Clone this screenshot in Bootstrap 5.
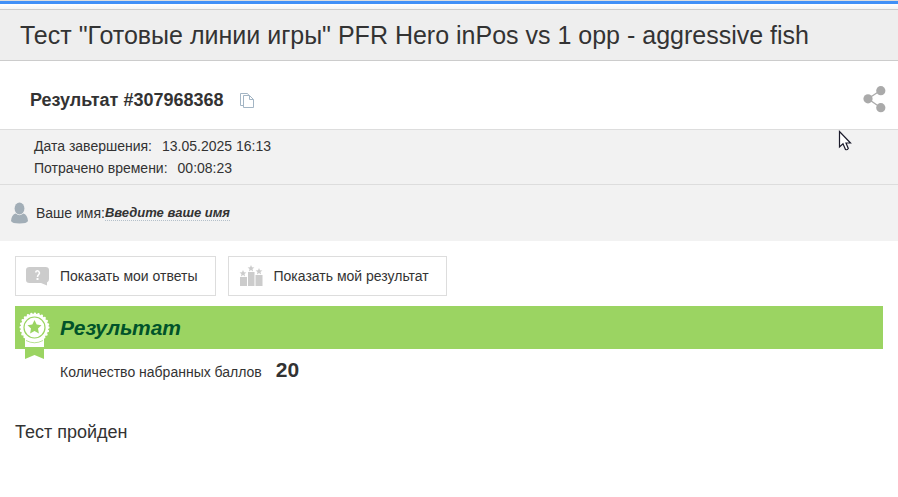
<!DOCTYPE html>
<html lang="ru">
<head>
<meta charset="utf-8">
<meta name="viewport" content="width=device-width, initial-scale=1">
<title>Результат теста</title>
<link href="https://cdn.jsdelivr.net/npm/bootstrap@5.3.0/dist/css/bootstrap.min.css" rel="stylesheet">
<style>
body { font-family: "Liberation Sans", Arial, sans-serif; font-size: 14px; line-height: 22px; color: #333; background: #fff; }
svg { display: block; flex: none; }
.top-line { height: 9px; border-top: 1px solid #ddd; background: linear-gradient(#4190f7 3px, #fff 3px, #f4f4f4); }
.title-bar { background: #eee; border-top: 1px solid #ccc; border-bottom: 1px solid #ccc; padding: 0 20px; }
.title-bar h1 { font-size: 25px; line-height: 50px; font-weight: 400; }
.result-head { padding: 20px 12px 10px 30px; border-bottom: 1px solid #ddd; }
.result-head h2 { font-size: 18px; line-height: 38px; font-weight: 700; }
.icon-btn { border: 0; padding: 0; background: none; }
.info { background: #f2f2f2; padding: 5px 34px; border-bottom: 1px solid #ddd; }
.info dt { font-weight: 400; }
.info dd { margin: 0 0 0 10px; }
.person { background: #f2f2f2; padding: 17px 11px; }
.name-link { font-size: 13px; line-height: 15px; font-weight: 700; font-style: italic; color: #333; text-decoration: none; border-bottom: 1px dotted #b4c0ca; }
.content { padding: 15px; }
.tools { gap: 12px; }
.btn-tool { border: 1px solid #ddd; border-radius: 0; padding: 8px 17px 8px 10px; font-size: 14px; line-height: 22px; color: #333; background: #fff; }
.btn-tool:hover { border-color: #bbb; }
.award { background: #9bd462; padding-left: 45px; margin-top: 10px; }
.award h3 { font-size: 21px; line-height: 43px; font-weight: 700; font-style: italic; color: #00532a; }
.medal { left: 4px; top: 6px; }
.score { padding: 9px 45px; line-height: 24px; gap: 14px; }
.score strong { font-size: 21px; }
.passed { font-size: 18px; line-height: 24px; margin-top: 27px; }
.pointer { left: 838px; top: 130px; pointer-events: none; }
</style>
<script src="https://cdn.jsdelivr.net/npm/bootstrap@5.3.0/dist/js/bootstrap.bundle.min.js" defer></script>
</head>
<body>
<div class="top-line"></div>
<header class="title-bar"><h1 class="m-0">Тест "Готовые линии игры" PFR Hero inPos vs 1 opp - aggressive fish</h1></header>
<main>
  <section class="result-head d-flex align-items-center">
    <h2 class="m-0">Результат #307968368</h2>
    <button class="icon-btn ms-3" type="button" aria-label="Скопировать">
      <svg width="15" height="16" viewBox="0 0 15 16" fill="none" stroke="#a3b5c4"><path d="M3 13.500H.5V1.500H7.500L9 3.500"/><path d="M3.500 3.500H9.500L13.500 7.500V15.500H3.500Z" fill="#fff"/><path d="M9.500 3.500V7.500H13.500"/></svg>
    </button>
    <button class="icon-btn ms-auto" type="button" aria-label="Поделиться">
      <svg width="23" height="28" viewBox="0 0 23 28" fill="#aaa"><path d="M17.500 4.500 5 12.800 17.500 21.500" fill="none" stroke="#aaa" stroke-width="1.300"/><circle cx="5" cy="12.800" r="4.600"/><circle cx="17.800" cy="4.700" r="4.600"/><circle cx="17.800" cy="21.700" r="4.600"/></svg>
    </button>
  </section>
  <dl class="info m-0">
    <div class="d-flex"><dt>Дата завершения:</dt><dd>13.05.2025 16:13</dd></div>
    <div class="d-flex"><dt>Потрачено времени:</dt><dd>00:08:23</dd></div>
  </dl>
  <section class="person d-flex align-items-center">
    <svg class="me-2" width="17" height="22" viewBox="0 0 17 22" fill="#a2aeb7"><ellipse cx="8.500" cy="6.500" rx="4.900" ry="6"/><path d="M4.800 11.500Q8.500 15 12.200 11.500Q16.500 12.500 17 19Q16 21.500 8.500 21.500T0 19Q.5 12.500 4.800 11.500Z"/></svg>
    <span>Ваше имя:</span><a class="name-link" href="#">Введите ваше имя</a>
  </section>
  <section class="content">
    <div class="tools d-flex flex-wrap">
      <button class="btn-tool d-flex align-items-center" type="button">
        <svg width="34" height="22" viewBox="0 0 34 22"><path d="M3.500 2H19.500Q23 2 23 5V14Q23 17 21 17.500V20.500L15 18H3.500Q0 18 0 15V5Q0 2 3.500 2Z" fill="#ccc"/><path d="M9.600 7.500Q10 5.700 11.500 5.700T13.500 8C13.500 9.500 11.500 9.800 11.500 12" fill="none" stroke="#fff" stroke-width="1.500"/><path d="M10.500 13H12.500V15H10.500Z" fill="#fff"/></svg>
        Показать мои ответы
      </button>
      <button class="btn-tool d-flex align-items-center" type="button">
        <svg width="35" height="22" viewBox="0 0 35 22" fill="#ccc"><path d="M1 12H8V21H1ZM9 7H15.500V21H9ZM16.500 10H23.500V21H16.500Z"/><path id="star" d="M12 0 13 2.300 15.400 2.500 13.500 4.100 14.100 6.400 12 5.100 9.900 6.400 10.500 4.100 8.600 2.500 11 2.300Z"/><use href="#star" x="-8" y="5"/><use href="#star" x="8" y="3"/></svg>
        Показать мой результат
      </button>
    </div>
    <div class="award position-relative">
      <svg class="medal position-absolute" width="32" height="48" viewBox="0 0 32 48"><path d="M6 24H25V35H6Z" fill="#fff"/><path d="M6 36H25V47L15.500 43 6 47Z" fill="#9bd462"/><circle cx="15.500" cy="15.500" r="13.800" fill="#fff"/><circle cx="15.500" cy="15.500" r="13.800" fill="none" stroke="#fff" stroke-width="2.500" stroke-linecap="round" stroke-dasharray="0 3.613"/><circle cx="15.500" cy="15.500" r="10.500" fill="none" stroke="#9bd462" stroke-width="1.200"/><path d="M7 28.500Q15.500 33 24 28.500" fill="none" stroke="#9bd462" stroke-width=".7"/><path d="M15.500 8 17.700 12.600 22.500 13.200 19 16.600 19.900 21.500 15.500 19.100 11.100 21.500 12 16.600 8.500 13.200 13.300 12.600Z" fill="#9bd462"/></svg>
      <h3 class="m-0">Результат</h3>
    </div>
    <div class="score d-flex align-items-baseline"><span>Количество набранных баллов</span><strong>20</strong></div>
    <p class="passed mb-0">Тест пройден</p>
  </section>
</main>
<svg class="pointer position-absolute" width="14" height="22" viewBox="0 0 14 22" aria-hidden="true"><path d="M1.500 1.500V17L5 13.800 7.500 19.500Q9 20.300 10.300 18.500L8 13H12.500Z" fill="#fff" stroke="#1b1b2b" stroke-width="1.200"/></svg>
</body>
</html>
